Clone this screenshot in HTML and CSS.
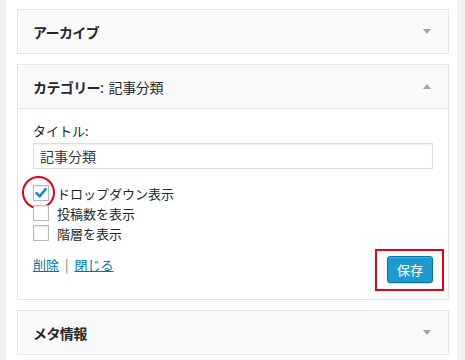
FILE: index.html
```html
<!DOCTYPE html>
<html lang="ja">
<head>
  <meta charset="UTF-8">
  <meta name="viewport" content="width=device-width, initial-scale=1.0">
  <title>ウィジェット</title>
  <link rel="stylesheet" href="styles.css">
</head>
<body>

  <div class="sidebar">
    <div class="widget">
      <div class="widget-top">
        <h3>アーカイブ</h3>
        <span class="arrow down"></span>
      </div>
    </div>

    <div class="widget open">
      <div class="widget-top">
        <h3>カテゴリー<span class="in-title">: 記事分類</span></h3>
        <span class="arrow up"></span>
      </div>
      <div class="widget-inside">
        <label class="field-label">タイトル:</label>
        <input class="field" type="text" value="記事分類">

        <div class="checks">
          <div class="check-row">
            <span class="checkbox checked marked">
              <svg width="14" height="14" viewBox="0 0 14 14"><path d="M2.5 7.2 L5.6 10.3 L11.6 3.2" fill="none" stroke="#1e8cbe" stroke-width="2.6" stroke-linecap="round" stroke-linejoin="round"/></svg>
            </span>
            <span>ドロップダウン表示</span>
          </div>
          <div class="check-row">
            <span class="checkbox"></span>
            <span>投稿数を表示</span>
          </div>
          <div class="check-row">
            <span class="checkbox"></span>
            <span>階層を表示</span>
          </div>
        </div>

        <div class="controls">
          <div class="links">
            <a href="#">削除</a><span class="sep">|</span><a href="#">閉じる</a>
          </div>
          <div class="save-wrap">
            <button class="button-primary">保存</button>
          </div>
        </div>
      </div>
    </div>

    <div class="widget">
      <div class="widget-top">
        <h3>メタ情報</h3>
        <span class="arrow down"></span>
      </div>
    </div>
  </div>

</body>
</html>
```

FILE: styles.css
```css
body {
  margin: 0;
  background-color: #f1f1f1;
  font-family: "Noto Sans CJK JP", "Noto Sans", sans-serif;
  font-size: 13px;
  color: #23282d;
}
.sidebar {
  margin-left: 6px;
  width: 432px;
  height: 360px;
  padding: 9px 8px 0 11px;
  box-sizing: content-box;
  background-color: #fff;
}
.widget {
  border: 1px solid #e5e5e5;
  background-color: #fafafa;
  margin-bottom: 10px;
}
.widget-top {
  display: flex;
  align-items: center;
  justify-content: space-between;
  height: 43px;
  padding: 0 17px 0 15px;
}
.widget-top h3 {
  margin: 0;
  font-size: 14px;
  font-weight: bold;
  letter-spacing: -0.6px;
}
.in-title {
  font-weight: normal;
  letter-spacing: -0.3px;
  word-spacing: 2px;
}
.arrow {
  width: 0;
  height: 0;
  border-left: 4.5px solid transparent;
  border-right: 4.5px solid transparent;
}
.arrow.down {
  border-top: 5px solid #a0a5aa;
}
.arrow.up {
  border-bottom: 5px solid #a0a5aa;
}
.widget-inside {
  border-top: 1px solid #e5e5e5;
  background-color: #fff;
  padding: 12px 15px 16px;
}
.field-label {
  display: block;
  line-height: 20px;
}
.field {
  display: block;
  box-sizing: border-box;
  width: 100%;
  height: 26px;
  margin-top: 2px;
  padding: 0 6px;
  border: 1px solid #ddd;
  box-shadow: inset 0 1px 2px rgba(0, 0, 0, 0.07);
  font-family: inherit;
  font-size: 14px;
  color: #32373c;
  outline: none;
}
.checks {
  margin-top: 14px;
}
.check-row {
  display: flex;
  align-items: center;
  gap: 8px;
  height: 20px;
}
.checkbox {
  position: relative;
  display: flex;
  align-items: center;
  justify-content: center;
  width: 16px;
  height: 16px;
  box-sizing: border-box;
  border: 1px solid #b4b9be;
  background-color: #fff;
  box-shadow: inset 0 1px 2px rgba(0, 0, 0, 0.1);
}
.checkbox.marked::after {
  content: "";
  position: absolute;
  left: -12px;
  top: -10px;
  width: 29px;
  height: 29px;
  border: 2px solid #e60012;
  border-radius: 50%;
}
.controls {
  display: flex;
  justify-content: space-between;
  align-items: flex-start;
  margin-top: 13px;
}
.links {
  line-height: 18px;
}
.links a {
  color: #0073aa;
}
.sep {
  margin: 0 6px;
  color: #72777c;
}
.save-wrap {
  position: relative;
}
.save-wrap::after {
  content: "";
  position: absolute;
  left: -12px;
  top: -7px;
  right: -11px;
  bottom: -8px;
  border: 2px solid #e60012;
}
.button-primary {
  display: block;
  width: 46px;
  height: 27px;
  padding: 0;
  border: 1px solid #0073aa;
  border-radius: 3px;
  background-color: #1d9bd1;
  box-shadow: inset 0 1px 0 rgba(120, 200, 230, 0.5), 0 1px 0 rgba(0, 0, 0, 0.15);
  color: #fff;
  font-family: inherit;
  font-size: 13px;
  cursor: pointer;
}
```
